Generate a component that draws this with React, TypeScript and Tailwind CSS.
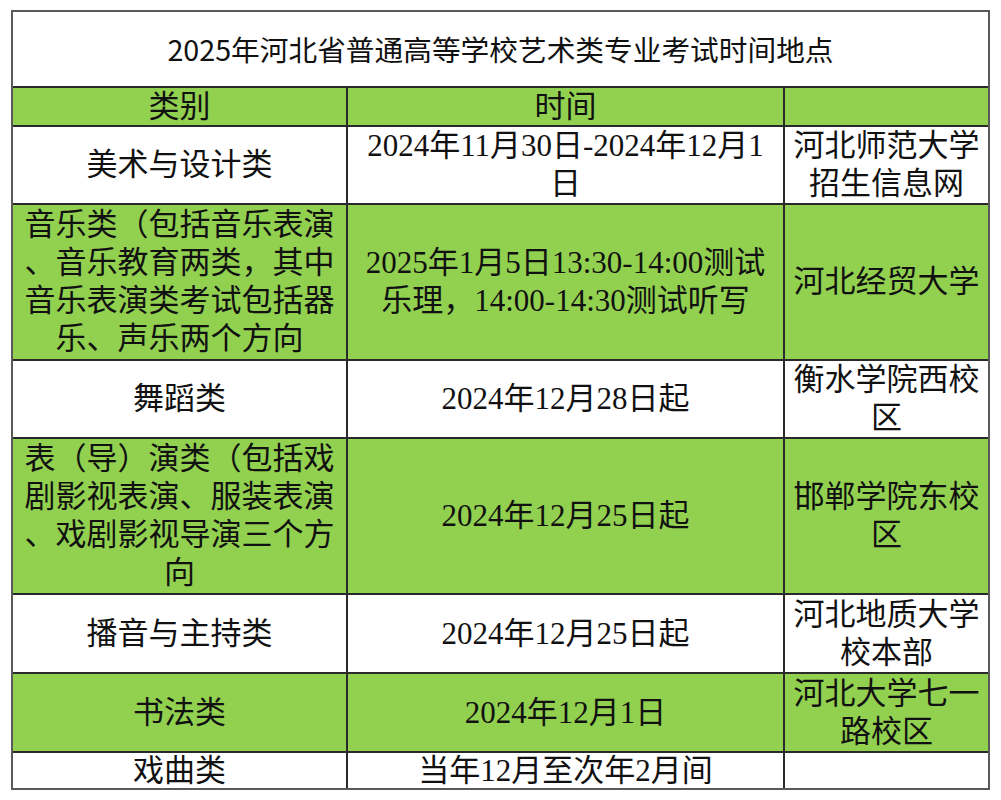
import React from "react";

type Row = { green: boolean; h: string; cells: string[][] };

const rows: Row[] = [
  { green: true, h: "h-[37px]", cells: [["类别"], ["时间"], [""]] },
  {
    green: false,
    h: "h-[76px]",
    cells: [["美术与设计类"], ["2024年11月30日-2024年12月1", "日"], ["河北师范大学", "招生信息网"]],
  },
  {
    green: true,
    h: "h-[154px]",
    cells: [
      ["音乐类（包括音乐表演", "、音乐教育两类，其中", "音乐表演类考试包括器", "乐、声乐两个方向"],
      ["2025年1月5日13:30-14:00测试", "乐理，14:00-14:30测试听写"],
      ["河北经贸大学"],
    ],
  },
  {
    green: false,
    h: "h-[76px]",
    cells: [["舞蹈类"], ["2024年12月28日起"], ["衡水学院西校", "区"]],
  },
  {
    green: true,
    h: "h-[154px]",
    cells: [
      ["表（导）演类（包括戏", "剧影视表演、服装表演", "、戏剧影视导演三个方", "向"],
      ["2024年12月25日起"],
      ["邯郸学院东校", "区"],
    ],
  },
  {
    green: false,
    h: "h-[77px]",
    cells: [["播音与主持类"], ["2024年12月25日起"], ["河北地质大学", "校本部"]],
  },
  {
    green: true,
    h: "h-[77px]",
    cells: [["书法类"], ["2024年12月1日"], ["河北大学七一", "路校区"]],
  },
  {
    green: false,
    h: "h-[35px]",
    cells: [["戏曲类"], ["当年12月至次年2月间"], [""]],
  },
];

function CellView({ lines, green }: { lines: string[]; green: boolean }) {
  return (
    <div
      className={`flex flex-col items-center justify-center overflow-hidden font-['Liberation_Serif','Noto_Sans_CJK_SC',serif] ${
        green ? "bg-[#92d050]" : "bg-white"
      }`}
    >
      {lines.map((l, i) => (
        <div
          key={i}
          className="whitespace-nowrap text-[31px] leading-[38px] text-[#111] font-['Liberation_Serif','Noto_Sans_CJK_SC',serif]"
        >
          {l || "\u00a0"}
        </div>
      ))}
    </div>
  );
}

export default function App() {
  return (
    <div className="w-[1001px] h-[800px] bg-white pt-[10px] pl-[11px]">
      <div className="w-[979px] border-2 border-[#5a5a5a] bg-[#2a2a2a]">
        <div className="grid grid-cols-[333px_435px_203px] gap-[2px]">
          <div className="col-span-3 h-[74px] bg-white flex items-center justify-center text-[28.7px] text-[#111] font-['Noto_Sans_CJK_SC','Noto_Sans',sans-serif]">
            2025年河北省普通高等学校艺术类专业考试时间地点
          </div>
          {rows.map((r, ri) =>
            r.cells.map((c, ci) => (
              <div key={`${ri}-${ci}`} className={`${r.h} grid`}>
                <CellView lines={c} green={r.green} />
              </div>
            ))
          )}
        </div>
      </div>
    </div>
  );
}
